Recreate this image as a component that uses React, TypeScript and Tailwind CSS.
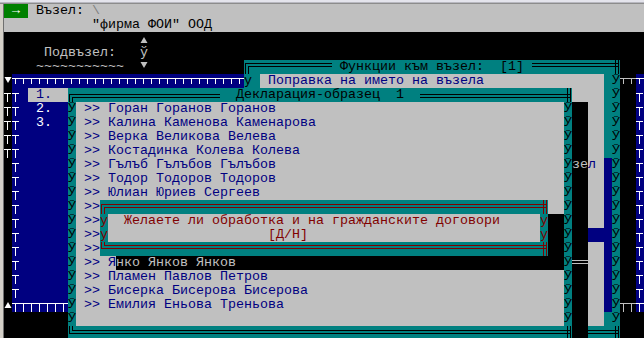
import React from "react";

// DOS text screen: 80x24 cells, 8x14 px each

const range = (n: number) => Array.from({ length: n }, (_, i) => i);

function Tee({
  pt = "pt-[4px]",
  stem = "h-[5px]",
  bar = "w-[8px]",
  tone = "bg-white",
}: {
  pt?: string;
  stem?: string;
  bar?: string;
  tone?: string;
}) {
  return (
    <div className={`w-[8px] h-[14px] shrink-0 flex flex-col ${pt}`}>
      <div className={`h-px ${bar} ${tone}`} />
      <div className={`w-px ml-[3px] ${stem} ${tone}`} />
    </div>
  );
}

function Tri({ up = false, y = 3, tone = "#ffffff" }: { up?: boolean; y?: number; tone?: string }) {
  const pts = up ? `4,${y} 7.5,${y + 6} 0.5,${y + 6}` : `0.5,${y} 7.5,${y} 4,${y + 6}`;
  return (
    <svg width="8" height="14" className="block shrink-0">
      <polygon points={pts} fill={tone} />
    </svg>
  );
}

function Corner({ kind, a, b, stroke }: { kind: "tl" | "bl" | "end"; a: number; b: number; stroke: string }) {
  let d = "";
  if (kind === "tl") d = `M1.5 14V${a + 0.5}H8M4.5 14V${b + 0.5}H8`;
  else if (kind === "bl") d = `M1.5 0V${b + 0.5}H8M4.5 0V${a + 0.5}H8`;
  else d = `M0 ${a + 0.5}H7M0 ${b + 0.5}H7M3.5 0V14M6.5 0V14`;
  return (
    <svg width="8" height="14" className="block shrink-0">
      <path d={d} stroke={stroke} fill="none" strokeWidth="1" shapeRendering="crispEdges" />
    </svg>
  );
}

function Dbl({ w = "flex-1", mt, tone }: { w?: string; mt: string; tone: string }) {
  return (
    <div className={`h-[14px] ${w}`}>
      <div className={`h-[4px] border-y ${mt} ${tone}`} />
    </div>
  );
}

function Side({ ch = "Ў", tone = "text-black" }: { ch?: string; tone?: string }) {
  return <div className={`w-[8px] h-[14px] shrink-0 overflow-hidden ${tone}`}>{ch}</div>;
}

const listItems = ["1.", "2.", "3."];

function NodeList() {
  return (
    <div className="absolute left-0 top-[70px] w-[640px] h-[238px] flex flex-col">
      <div className="flex h-[14px]">
        <div className="w-[8px] bg-black">
          <Tri y={3} />
        </div>
        <div className="flex flex-1 bg-[#000080]">
          {range(79).map((i) => (
            <Tee key={i} />
          ))}
        </div>
      </div>
      {range(15).map((r) => (
        <div key={r} className="flex h-[14px]">
          <div className="w-[8px] bg-black">{r < 5 && <Tee pt="pt-[5px]" stem="h-[8px]" bar="w-[7px]" />}</div>
          <div className="flex flex-1 bg-[#000080] text-white">
            <Tee pt="pt-[5px]" stem="h-[8px]" bar="w-[7px]" />
            <div className="w-[8px]" />
            {listItems[r] && (
              <div className={r === 0 ? "w-[40px] bg-[#c0c0c0] text-[#000080]" : "w-[40px]"}>
                {" " + listItems[r]}
              </div>
            )}
            <div className="flex-1" />
            <Tee pt="pt-[5px]" stem="h-[8px]" bar="w-[7px]" />
          </div>
        </div>
      ))}
      <div className="flex h-[14px]">
        <div className="w-[8px] bg-black">
          <Tri up y={4} />
        </div>
        <div className="flex flex-1 bg-[#000080]">
          {range(79).map((i) => (
            <Tee key={i} pt="pt-[5px]" stem="h-[8px]" />
          ))}
        </div>
      </div>
    </div>
  );
}

function FunctionsBox() {
  return (
    <div className="absolute left-[240px] top-[56px] w-[376px] h-[280px] bg-[#008080] flex flex-col">
      <div className="flex h-[14px]">
        <Corner kind="tl" a={3} b={6} stroke="#000" />
        <Dbl w="w-[80px]" mt="mt-[3px]" tone="border-black" />
        <div className="w-[8px]" />
        <div className="w-[184px] text-black">{"Функции към възел:  [1]"}</div>
        <div className="w-[8px]" />
        <Dbl w="w-[80px]" mt="mt-[3px]" tone="border-black" />
        <Corner kind="end" a={3} b={6} stroke="#000" />
      </div>
      {range(18).map((r) => (
        <div key={r} className="flex h-[14px]">
          {r === 0 ? <Side ch="у" /> : <div className="w-[8px]" />}
          <div className="w-[8px]" />
          <div
            className={
              r === 11
                ? "w-[344px] bg-[#000080] text-white"
                : r === 6
                  ? "w-[344px] bg-[#c0c0c0] text-[#000080] flex justify-end pr-[8px]"
                  : "w-[344px] bg-[#c0c0c0] text-[#000080]"
            }
          >
            {r === 0 && " Поправка на името на възела"}
            {r === 6 && "л"}
          </div>
          <div className={r >= 6 && r <= 16 ? "w-[8px] bg-[#000080]" : "w-[8px]"} />
          <Side />
        </div>
      ))}
      <div className="flex h-[14px]">
        <Corner kind="bl" a={4} b={7} stroke="#000" />
        <Dbl mt="mt-[4px]" tone="border-black" />
        <Corner kind="end" a={4} b={7} stroke="#000" />
      </div>
    </div>
  );
}

// rows 7..22 of the declaration list; rows under the dialog show only ">>"
const people: (string | null)[] = [
  "Горан Горанов Горанов",
  "Калина Каменова Каменарова",
  "Верка Великова Велева",
  "Костадинка Колева Колева",
  "Гълъб Гълъбов Гълъбов",
  "Тодор Тодоров Тодоров",
  "Юлиан Юриев Сергеев",
  "",
  "",
  "",
  "",
  "Я",
  "Пламен Павлов Петров",
  "Бисерка Бисерова Бисерова",
  "Емилия Еньова Треньова",
  null,
];

function DeclarationBox() {
  return (
    <div className="absolute left-[64px] top-[84px] w-[504px] h-[252px] bg-[#008080] flex flex-col">
      <div className="flex h-[14px]">
        <Corner kind="tl" a={6} b={9} stroke="#000" />
        <Dbl w="w-[144px]" mt="mt-[6px]" tone="border-black" />
        <div className="w-[16px]" />
        <div className="w-[168px] text-black">{"Декларация-образец  1"}</div>
        <div className="w-[16px]" />
        <Dbl w="w-[144px]" mt="mt-[6px]" tone="border-black" />
        <Corner kind="end" a={6} b={9} stroke="#000" />
      </div>
      {people.map((p, r) => (
        <div key={r} className="flex h-[14px]">
          <Side />
          <div className="w-[488px] bg-[#c0c0c0] text-[#000080] pl-[8px]">
            {p === null ? "" : p === "" ? ">>" : ">> " + p}
          </div>
          <Side />
        </div>
      ))}
      <div className="flex h-[14px]">
        <Corner kind="bl" a={4} b={7} stroke="#000" />
        <Dbl mt="mt-[4px]" tone="border-black" />
        <Corner kind="end" a={4} b={7} stroke="#000" />
      </div>
    </div>
  );
}

function ConfirmDialog() {
  return (
    <>
      <div className="absolute left-[96px] top-[196px] w-[448px] h-[56px] bg-[#008080] flex flex-col">
        <div className="flex h-[14px]">
          <Corner kind="tl" a={4} b={7} stroke="#800000" />
          <Dbl mt="mt-[4px]" tone="border-[#800000]" />
          <Corner kind="end" a={4} b={7} stroke="#800000" />
        </div>
        <div className="flex h-[14px]">
          <Side ch="у" tone="text-[#800000]" />
          <div className="w-[432px] bg-[#c0c0c0] text-[#800000] pl-[16px]">
            Желаете ли обработка и на гражданските договори
          </div>
          <Side ch="у" tone="text-[#800000]" />
        </div>
        <div className="flex h-[14px]">
          <Side ch="у" tone="text-[#800000]" />
          <div className="w-[432px] bg-[#c0c0c0] text-[#800000] pl-[160px]">[Д/Н]</div>
          <Side ch="у" tone="text-[#800000]" />
        </div>
        <div className="flex h-[14px]">
          <Corner kind="bl" a={3} b={6} stroke="#800000" />
          <Dbl mt="mt-[3px]" tone="border-[#800000]" />
          <Corner kind="end" a={3} b={6} stroke="#800000" />
        </div>
      </div>
      {/* shadow; the list row below still shows through in grey */}
      <div className="absolute left-[544px] top-[210px] w-[16px] h-[42px] bg-black" />
      <div className="absolute left-[112px] top-[252px] w-[448px] h-[14px] bg-black text-[#c0c0c0]">
        нко Янков Янков
      </div>
    </>
  );
}

export default function App() {
  return (
    <div className="w-[644px] h-[338px] overflow-hidden bg-[#d4d0c8] flex flex-col font-['Liberation_Mono',monospace] text-[13.333px] leading-[14px] whitespace-pre">
      <div className="h-[4px] shrink-0 border-t-2 border-b border-t-[#e4e4ec] border-b-[#8c8c8c] bg-[#b8b8c0]" />
      <div className="flex flex-1">
        <div className="w-[4px] shrink-0 border-r border-[#707070] bg-[#d4d0c8]" />
        <div className="relative w-[640px] h-[334px] shrink-0 overflow-hidden bg-black">
          {/* header */}
          <div className="bg-[#c0c0c0] text-black">
            <div className="flex h-[14px]">
              <div className="w-[24px] bg-[#008000] text-white text-center">→</div>
              <span>{" Възел: "}</span>
              <span className="text-[#808080]">{"\\"}</span>
            </div>
            <div className="h-[14px] pl-[88px]">{'"фирма ФОИ" ООД'}</div>
          </div>

          {/* sub-node selector */}
          <div className="h-[14px] pl-[136px] flex">
            <Tri up y={5} tone="#c0c0c0" />
          </div>
          <div className="h-[14px] pl-[40px] text-[#c0c0c0]">{"Подвъзел:   ў"}</div>
          <div className="h-[14px] pl-[32px] flex text-[#c0c0c0]">
            <span>{"~~~~~~~~~~~  "}</span>
            <Tri y={2} tone="#c0c0c0" />
          </div>

          <NodeList />
          <FunctionsBox />
          {/* shadow of functions box */}
          <div className="absolute left-[616px] top-[70px] w-[16px] h-[266px] bg-black flex flex-col">
            <div className="flex">
              <Tee tone="bg-[#c0c0c0]" />
              <Tee tone="bg-[#c0c0c0]" />
            </div>
            <div className="h-[210px]" />
            <div className="flex">
              <Tee pt="pt-[5px]" stem="h-[8px]" tone="bg-[#c0c0c0]" />
              <Tee pt="pt-[5px]" stem="h-[8px]" tone="bg-[#c0c0c0]" />
            </div>
          </div>

          <DeclarationBox />
          {/* shadow of declaration box */}
          <div className="absolute left-[568px] top-[98px] w-[16px] h-[238px] bg-black flex flex-col">
            <div className="h-[56px]" />
            <div className="h-[14px] text-[#c0c0c0]">зе</div>
            <div className="flex-1" />
            <Dbl mt="mt-[4px]" tone="border-[#c0c0c0]" />
          </div>

          <ConfirmDialog />
        </div>
      </div>
    </div>
  );
}
